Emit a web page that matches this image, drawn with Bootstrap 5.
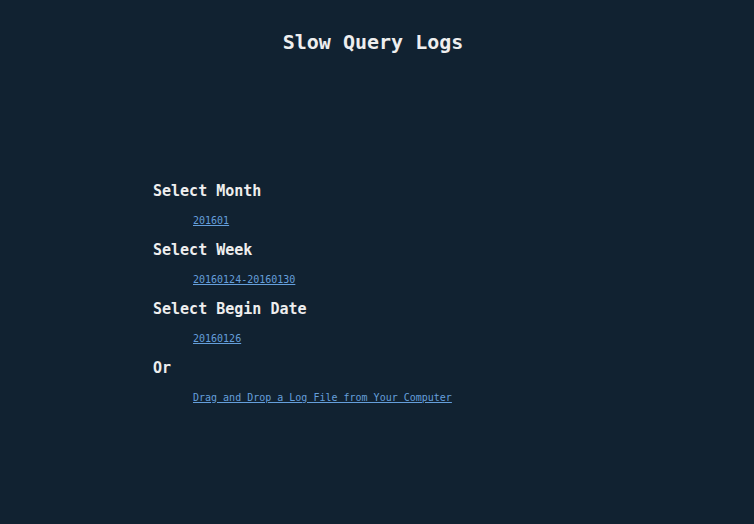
<!DOCTYPE html>
<html lang="en">
<head>
<meta charset="utf-8">
<meta name="viewport" content="width=device-width, initial-scale=1">
<title>Slow Query Logs</title>
<link rel="stylesheet" href="https://cdn.jsdelivr.net/npm/bootstrap@5.3.0/dist/css/bootstrap.min.css">
<style>
  body { background: #112231; color: #eee; font-family: "DejaVu Sans Mono", monospace; font-size: 10px; line-height: 16px; }
  h1 { font-size: 20px; line-height: 24px; padding-top: 30px; margin-bottom: 125px; }
  h2 { font-size: 15px; line-height: 24px; margin-bottom: 10px; }
  .log-picker { max-width: 440px; }
  .log-group { margin-bottom: 9px; }
  .log-list { padding-left: 40px; }
  .log-list a { color: #659fdb; }
</style>
<script src="https://cdn.jsdelivr.net/npm/bootstrap@5.3.0/dist/js/bootstrap.bundle.min.js" defer></script>
</head>
<body class="pe-2">
  <header>
    <h1 class="text-center fw-bold">Slow Query Logs</h1>
  </header>
  <main class="log-picker mx-auto">
    <section class="log-group">
      <h2 class="fw-bold">Select Month</h2>
      <ul class="log-list list-unstyled mb-0"><li><a href="#201601">201601</a></li></ul>
    </section>
    <section class="log-group">
      <h2 class="fw-bold">Select Week</h2>
      <ul class="log-list list-unstyled mb-0"><li><a href="#20160124-20160130">20160124-20160130</a></li></ul>
    </section>
    <section class="log-group">
      <h2 class="fw-bold">Select Begin Date</h2>
      <ul class="log-list list-unstyled mb-0"><li><a href="#20160126">20160126</a></li></ul>
    </section>
    <section class="log-group">
      <h2 class="fw-bold">Or</h2>
      <ul class="log-list list-unstyled mb-0"><li><a href="#drop">Drag and Drop a Log File from Your Computer</a></li></ul>
    </section>
  </main>
</body>
</html>
